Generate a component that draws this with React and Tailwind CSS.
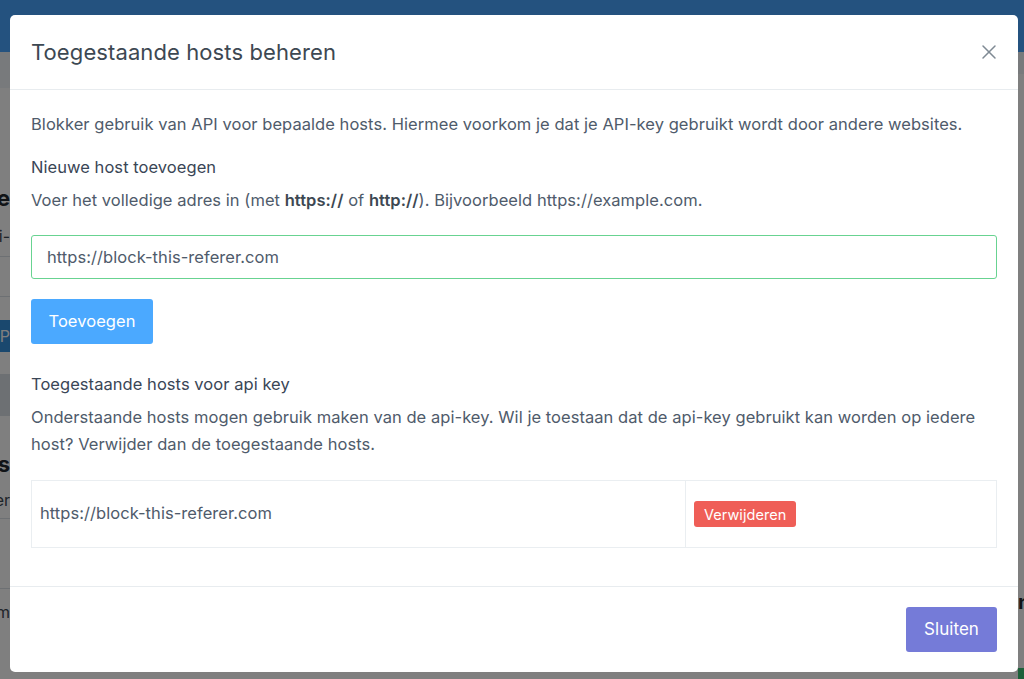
import { X } from "lucide-react";

function BackgroundPage() {
  return (
    <div className="min-h-[679px] bg-white">
      <div className="h-[52px] bg-[#48a4fe]" />
      <div className="flex justify-between">
        <div className="w-[10px] overflow-hidden flex flex-col">
          <div className="h-[36px] bg-[#f1f5f8]" />
          <div className="h-[92px]" />
          <div className="h-[36px] whitespace-nowrap text-[22px] font-bold text-[#22292f] flex justify-end leading-[36px]">ie</div>
          <div className="h-[40px] whitespace-nowrap text-[16px] text-[#3d4852] flex justify-end items-center">i-</div>
          <div className="h-[40px] border-t border-[#dae1e7]" />
          <div className="h-[24px] border-t border-[#dae1e7]" />
          <div className="h-[32px] bg-[#3490dc] text-white flex justify-end items-center text-[16px]">P</div>
          <div className="h-[22px]" />
          <div className="h-[42px] bg-[#dae1e7]" />
          <div className="h-[30px]" />
          <div className="h-[36px] whitespace-nowrap text-[22px] font-bold text-[#22292f] flex justify-end items-center">ys</div>
          <div className="h-[36px] whitespace-nowrap text-[16px] text-[#3d4852] flex justify-end items-center">er</div>
          <div className="h-[70px] border-t border-[#dae1e7]" />
          <div className="h-[36px] border-t border-[#dae1e7] whitespace-nowrap text-[16px] text-[#3d4852] flex justify-end items-end">m</div>
        </div>
        <div className="w-[6px] overflow-hidden flex flex-col">
          <div className="h-[22px] bg-[#f1f5f8]" />
          <div className="h-[510px]" />
          <div className="h-[36px] whitespace-nowrap text-[20px] font-bold text-[#22292f] flex items-center">nt</div>
          <div className="h-[48px]" />
          <div className="h-[20px] bg-[#38c172]" />
        </div>
      </div>
    </div>
  );
}

export default function App() {
  return (
    <div className="relative w-[1024px] h-[679px] overflow-hidden" style={{ fontFamily: "Inter, 'Noto Sans', sans-serif" }}>
      <BackgroundPage />
      <div className="absolute inset-0 bg-black/50 pt-[15px] pl-[10px]">
        <div className="w-[1008px] h-[657px] bg-white rounded-[5px] flex flex-col text-[#4f5b6b] tracking-[0.05px]">
          <div className="h-[75px] px-[21px] flex items-center justify-between border-b border-[#e8ecef]">
            <h2 className="text-[22px] text-[#3d4852] tracking-[0.1px] pt-[1px]">Toegestaande hosts beheren</h2>
            <X className="w-[24px] h-[24px] text-[#7f8a94] mr-[-4px]" strokeWidth={1.5} />
          </div>
          <div className="flex-1 px-[21px] pt-[21px] text-[16.5px] leading-[27px]">
            <p>Blokker gebruik van API voor bepaalde hosts. Hiermee voorkom je dat je API-key gebruikt wordt door andere websites.</p>
            <h3 className="mt-[16px] text-[#3a4656]">Nieuwe host toevoegen</h3>
            <p className="mt-[6px]">
              Voer het volledige adres in (met <strong className="font-semibold text-[#3d4852]">https://</strong> of <strong className="font-semibold text-[#3d4852]">http://</strong>). Bijvoorbeeld https://example.com.
            </p>
            <div className="mt-[21px] h-[44px] border border-[#68d391] rounded-[3px] flex items-center px-[15px]">
              https://block-this-referer.com
            </div>
            <button className="mt-[20px] h-[45px] w-[122px] bg-[#4ba9ff] text-white rounded-[3px] text-[16.5px]">Toevoegen</button>
            <h3 className="mt-[27px] text-[#3a4656]">Toegestaande hosts voor api key</h3>
            <p className="mt-[6px]">Onderstaande hosts mogen gebruik maken van de api-key. Wil je toestaan dat de api-key gebruikt kan worden op iedere host? Verwijder dan de toegestaande hosts.</p>
            <div className="mt-[22px] h-[68px] border border-[#eaeef1] flex">
              <div className="w-[654px] border-r border-[#eaeef1] flex items-center px-[8px] pb-[1px]">https://block-this-referer.com</div>
              <div className="flex-1 flex items-center px-[8px]">
                <span className="h-[26px] px-[10px] bg-[#ef5e57] text-white text-[14.5px] rounded-[3px] flex items-center">Verwijderen</span>
              </div>
            </div>
          </div>
          <div className="h-[86px] border-t border-[#e8ecef] flex items-center justify-end px-[21px]">
            <button className="h-[45px] w-[91px] bg-[#757bd8] text-white rounded-[3px] text-[17px]">Sluiten</button>
          </div>
        </div>
      </div>
    </div>
  );
}
